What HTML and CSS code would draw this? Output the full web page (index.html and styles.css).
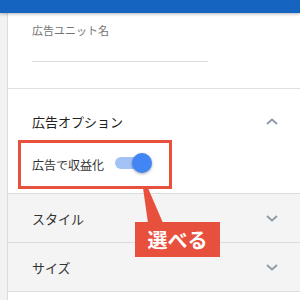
FILE: index.html
```html
<!DOCTYPE html>
<html lang="ja">
<head>
    <meta charset="UTF-8">
    <meta name="viewport" content="width=device-width, initial-scale=1.0">
    <title>広告ユニット</title>
    <link rel="stylesheet" href="styles.css">
</head>
<body>
    <div class="topbar"></div>

    <div class="main">
        <div class="rail"></div>

        <div class="panel">
            <div class="unit-field">
                <div class="field-label">広告ユニット名</div>
                <div class="field-input"></div>
            </div>

            <div class="options">
                <div class="section-head">
                    <span>広告オプション</span>
                    <svg class="chevron" width="12" height="7" viewBox="0 0 12 7">
                        <polyline points="1,6 6,1.5 11,6" fill="none" stroke="#8e9aa6" stroke-width="1.8"/>
                    </svg>
                </div>
                <div class="monetize">
                    <span>広告で収益化</span>
                    <span class="toggle"></span>
                </div>
            </div>

            <div class="acc-row">
                <span>スタイル</span>
                <svg class="chevron" width="12" height="7" viewBox="0 0 12 7">
                    <polyline points="1,1 6,5.5 11,1" fill="none" stroke="#8e9aa6" stroke-width="1.8"/>
                </svg>
            </div>
            <div class="acc-row">
                <span>サイズ</span>
                <svg class="chevron" width="12" height="7" viewBox="0 0 12 7">
                    <polyline points="1,1 6,5.5 11,1" fill="none" stroke="#8e9aa6" stroke-width="1.8"/>
                </svg>
            </div>
        </div>
    </div>

    <!-- annotation over the screenshot -->
    <svg class="pointer" width="26" height="36" viewBox="0 0 26 36">
        <polygon points="3,0 8,0 23,35 8,35" fill="#e8503e"/>
    </svg>
    <div class="callout">選べる</div>
</body>
</html>
```

FILE: styles.css
```css
* {
    box-sizing: border-box;
}
body {
    margin: 0;
    width: 300px;
    height: 300px;
    overflow: hidden;
    position: relative;
    background-color: #fff;
    font-family: "Noto Sans CJK JP", "Noto Sans", sans-serif;
    color: #212121;
}
.topbar {
    height: 13px;
    background-color: #1565c0;
    box-shadow: 0 1px 3px rgba(0, 0, 0, 0.3);
    position: relative;
    z-index: 1;
}
.main {
    display: flex;
    height: 287px;
}
.rail {
    width: 8px;
    background-color: #f2f2f2;
    border-right: 1px solid #dcdcdc;
}
.panel {
    flex: 1;
}
.unit-field {
    height: 76px;
    padding: 10px 0 0 24px;
    border-bottom: 1px solid #e0e0e0;
}
.field-label {
    font-size: 11px;
    line-height: 14px;
    color: #757575;
}
.field-input {
    width: 176px;
    height: 25px;
    border-bottom: 1px solid #dcdcdc;
}
.options {
    padding: 22px 0 4px;
    border-bottom: 1px solid #dcdcdc;
}
.section-head {
    display: flex;
    align-items: center;
    justify-content: space-between;
    height: 20px;
    padding: 0 22px 0 24px;
    font-size: 13px;
    margin-bottom: 9px;
}
.monetize {
    display: flex;
    align-items: center;
    gap: 11px;
    width: 154px;
    height: 49px;
    margin-left: 10px;
    padding-left: 11px;
    border: 3px solid #e8503e;
    font-size: 12px;
    color: #333;
}
.toggle {
    position: relative;
    width: 37px;
    height: 20px;
    margin-top: -3px;
}
.toggle::before {
    content: "";
    position: absolute;
    left: 0;
    top: 4px;
    width: 28px;
    height: 12px;
    border-radius: 6px;
    background-color: #a3c3f7;
}
.toggle::after {
    content: "";
    position: absolute;
    right: 0;
    top: 0;
    width: 20px;
    height: 20px;
    border-radius: 50%;
    background-color: #4285f4;
    box-shadow: 0 1px 3px rgba(0, 0, 0, 0.35);
}
.acc-row {
    display: flex;
    align-items: center;
    justify-content: space-between;
    height: 49px;
    padding: 0 22px 0 24px;
    background-color: #f4f4f4;
    border-bottom: 1px solid #dcdcdc;
    font-size: 13px;
    color: #333;
}
.chevron {
    display: block;
}
.pointer {
    position: absolute;
    left: 140px;
    top: 188px;
}
.callout {
    position: absolute;
    left: 135px;
    top: 222px;
    width: 85px;
    height: 35px;
    background-color: #e8503e;
    color: #fff;
    font-size: 20px;
    font-weight: bold;
    line-height: 35px;
    text-align: center;
}
```
